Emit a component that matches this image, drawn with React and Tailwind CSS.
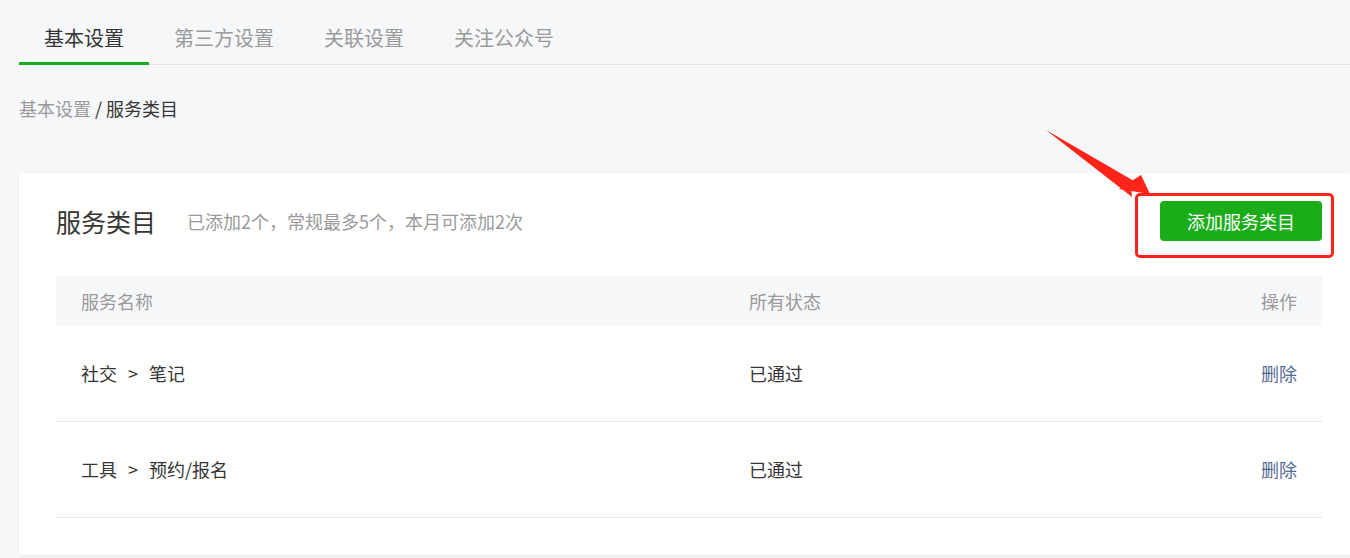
import React from 'react';

const tabs = ['基本设置', '第三方设置', '关联设置', '关注公众号'];

const rows = [
  { cat: '社交', sub: '笔记', status: '已通过' },
  { cat: '工具', sub: '预约/报名', status: '已通过' },
];

function App() {
  return (
    <div
      className="min-h-[558px] bg-[#f6f7f9] pl-[19px] overflow-hidden"
      style={{ fontFamily: '"Noto Sans CJK SC", "Noto Sans", sans-serif' }}
    >
      {/* tabs */}
      <div className="flex border-b border-[#e4e5e9] h-[65px]">
        {tabs.map((t, i) => (
          <div
            key={t}
            className={`px-[25px] pt-[24px] text-[20px] leading-[28px] ${
              i === 0
                ? 'text-[#353535] border-b-[3px] border-[#1aad19] -mb-px'
                : 'text-[#9a9a9a]'
            }`}
          >
            {t}
          </div>
        ))}
      </div>

      {/* breadcrumb */}
      <div className="mt-[31px] text-[18px] leading-[24px]">
        <span className="text-[#9a9a9a]">基本设置</span>
        <span className="text-[#353535]"> / 服务类目</span>
      </div>

      {/* card */}
      <div className="mt-[53px] bg-white rounded-l-[4px] pl-[37px] pr-[28px] pt-[28px] pb-[37px] shadow-[0_1px_3px_rgba(0,0,0,0.08)]">
        <div className="flex items-center h-[40px]">
          <div className="text-[25px] leading-[32px] text-[#353535]">服务类目</div>
          <div className="ml-[31px] text-[18px] leading-[24px] text-[#9a9a9a]">
            已添加2个，常规最多5个，本月可添加2次
          </div>
          <div className="ml-auto relative">
            <button className="h-[40px] w-[162px] rounded-[4px] bg-[#1aad19] text-white text-[18px] leading-[24px]">
              添加服务类目
            </button>
            {/* annotation box */}
            <div className="absolute left-[-25px] top-[-8px] w-[199px] h-[65px] border-[3px] border-[#ff2419] rounded-[5px]" />
            {/* annotation arrow */}
            <svg
              className="absolute left-[-114px] top-[-74px] overflow-visible"
              width="120"
              height="80"
              viewBox="0 0 120 80"
            >
              <polygon points="0,3 88,54 85,60 86,70" fill="#ff2419" />
              <polygon points="95,48 104,67 73,62" fill="#ff2419" />
            </svg>
          </div>
        </div>

        {/* table */}
        <div className="mt-[35px]">
          <div className="flex items-center h-[50px] bg-[#f6f7f9] px-[25px] text-[18px] text-[#9a9a9a]">
            <div className="w-[668px]">服务名称</div>
            <div className="flex-1">所有状态</div>
            <div>操作</div>
          </div>
          {rows.map((r) => (
            <div
              key={r.sub}
              className="flex items-center h-[96px] border-b border-[#e5e5e5] px-[25px] text-[18px] text-[#353535]"
            >
              <div className="w-[668px] flex items-center">
                <span>{r.cat}</span>
                <span className="mx-[11px]">&gt;</span>
                <span>{r.sub}</span>
              </div>
              <div className="flex-1">{r.status}</div>
              <div className="text-[#576b95] cursor-pointer">删除</div>
            </div>
          ))}
        </div>
      </div>
    </div>
  );
}

export default App;
